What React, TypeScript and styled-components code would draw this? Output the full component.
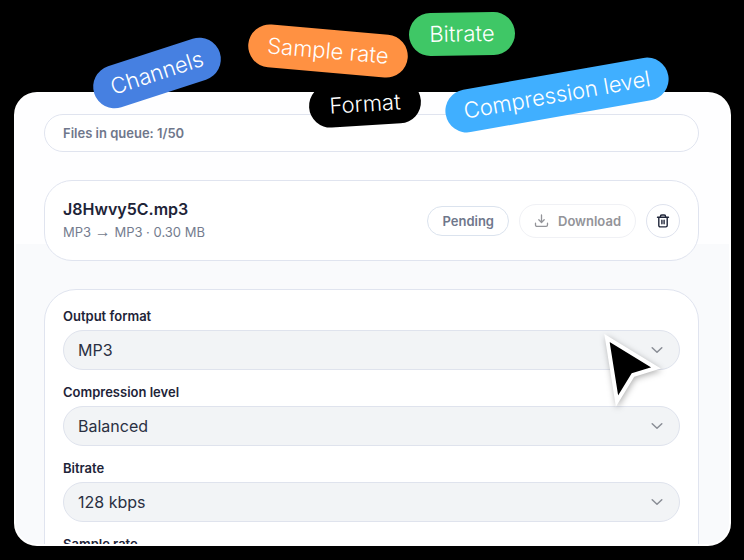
import React from "react";
import styled, { createGlobalStyle } from "styled-components";

const GlobalStyle = createGlobalStyle`
  * { box-sizing: border-box; }
  body { margin: 0; background: #000; font-family: Inter, "Liberation Sans", sans-serif; color: #1e2438; }
  button, select { font-family: inherit; }
`;

const Stage = styled.main`
  position: relative;
  display: flex;
  flex-direction: column;
  height: 100vh;
  padding: 92px 13px 14px 14px;
  overflow: hidden;
`;

const Panel = styled.section`
  flex: 1;
  min-height: 0;
  display: flex;
  flex-direction: column;
  gap: 28px;
  padding: 20px 30px 0 28px;
  overflow: hidden;
  border: 2px solid #fff;
  border-radius: 23px;
  background: linear-gradient(#fefeff 150px, #f9fafc 150px);
`;

const Card = styled.div`
  flex-shrink: 0;
  padding: 17px 18px;
  border: 1px solid #e0e4ef;
  border-radius: 32px;
  background: #fff;
`;

const QueueBar = styled(Card)`
  padding: 9px 18px;
  font-size: 13px;
  line-height: 18px;
  font-weight: 600;
  color: #6f778b;
`;

const FileCard = styled(Card)`
  display: flex;
  align-items: center;
  gap: 10px;
  padding: 16px 18px;
  border-radius: 28px;
`;

const FileInfo = styled.div`
  flex: 1;
  min-width: 0;
`;

const FileName = styled.h2`
  margin: 0;
  font-size: 16px;
  line-height: 24px;
  font-weight: 600;
`;

const FileMeta = styled.p`
  margin: 0;
  font-size: 13px;
  line-height: 23px;
  color: #747c8e;
`;

const Arrow = styled.span`
  font-family: "Liberation Sans", sans-serif;
  font-size: 16px;
  line-height: 1;
`;

const Status = styled.span`
  padding: 5px 14px;
  border: 1px solid #dbe3ee;
  border-radius: 15px;
  font-size: 13px;
  line-height: 18px;
  font-weight: 600;
  color: #6f778b;
`;

const ActionButton = styled.button`
  display: flex;
  align-items: center;
  justify-content: center;
  gap: 8px;
  height: 34px;
  padding: 0 14px;
  border: 1px solid #dfe3ee;
  border-radius: 17px;
  background: #fff;
  color: #1e2438;
  font-size: 13px;
  font-weight: 600;

  &:disabled {
    border-color: #f0f1f5;
    color: #939499;
  }
`;

const IconButton = styled(ActionButton)`
  width: 34px;
  padding: 0;
`;

const Settings = styled(Card)`
  display: flex;
  flex-direction: column;
  gap: 13px;
`;

const Field = styled.div`
  display: grid;
  gap: 5px;
`;

const Label = styled.label`
  font-size: 13px;
  line-height: 18px;
  font-weight: 600;
`;

const SelectBox = styled.div`
  display: grid;
  align-items: center;

  > * { grid-area: 1 / 1; }
  > svg { justify-self: end; margin-right: 16px; pointer-events: none; }
`;

const Select = styled.select`
  appearance: none;
  width: 100%;
  height: 40px;
  padding: 0 40px 0 14px;
  border: 1px solid #dfe3ed;
  border-radius: 20px;
  background: #f2f4f6;
  color: #2a3042;
  font-size: 16px;
`;

const Tag = styled.span<{ $x: number; $y: number; $width: number; $angle: number; $color: string }>`
  position: absolute;
  left: ${(p) => p.$x}px;
  top: ${(p) => p.$y}px;
  width: ${(p) => p.$width}px;
  transform: translate(-50%, -50%) rotate(${(p) => p.$angle}deg);
  border-radius: 22px;
  background: ${(p) => p.$color};
  color: #fff;
  font-size: 22px;
  font-weight: 300;
  font-optical-sizing: none;
  line-height: 43px;
  text-align: center;
  white-space: nowrap;
`;

const Pointer = styled.svg`
  position: absolute;
  left: 600px;
  top: 332px;
  filter: drop-shadow(1px 2px 3px rgba(0, 0, 0, 0.3));
  pointer-events: none;
`;

const Chevron = () => (
  <svg width="14" height="14" viewBox="0 0 14 14" fill="none" stroke="#8a8e96" strokeWidth="1.5" strokeLinecap="round" strokeLinejoin="round" aria-hidden="true">
    <path d="M2.2 4.7l4.8 4.6 4.8-4.6" />
  </svg>
);

const DownloadIcon = () => (
  <svg width="16" height="16" viewBox="0 0 16 16" fill="none" stroke="currentColor" strokeWidth="1.3" strokeLinecap="round" strokeLinejoin="round" aria-hidden="true">
    <path d="M7.5 2v7.4M4.8 6.8l2.7 2.7 2.7-2.7M1.5 10.2v1.8a1.4 1.4 0 0 0 1.4 1.4h9.2a1.4 1.4 0 0 0 1.4-1.4v-1.8" />
  </svg>
);

const TrashIcon = () => (
  <svg width="16" height="16" viewBox="0 0 16 16" fill="none" stroke="currentColor" strokeWidth="1.4" strokeLinecap="round" strokeLinejoin="round" aria-hidden="true">
    <path d="M2.5 4.2h11M5.4 4.2v-.8a1.4 1.4 0 0 1 1.4-1.4h2.4a1.4 1.4 0 0 1 1.4 1.4v.8M3.8 4.2v8.4a1.3 1.3 0 0 0 1.3 1.3h5.8a1.3 1.3 0 0 0 1.3-1.3V4.2M6.9 7.2v3.6M9.1 7.2v3.6" />
  </svg>
);

const fields = [
  { id: "format", label: "Output format", options: ["MP3", "WAV", "FLAC"] },
  { id: "compression", label: "Compression level", options: ["Balanced", "Low", "High"] },
  { id: "bitrate", label: "Bitrate", options: ["128 kbps", "192 kbps", "320 kbps"] },
  { id: "rate", label: "Sample rate", options: ["44100 Hz", "48000 Hz"] },
];

const tags = [
  { text: "Channels", x: 157, y: 73, width: 132, angle: -18, color: "#4680e1" },
  { text: "Format", x: 365, y: 104, width: 112, angle: -3.5, color: "#000" },
  { text: "Sample rate", x: 328, y: 51, width: 160, angle: 5, color: "#ff9142" },
  { text: "Bitrate", x: 462, y: 34, width: 106, angle: -1, color: "#3fc766" },
  { text: "Compression level", x: 557, y: 95, width: 226, angle: -10, color: "#40afff" },
];

export default function App() {
  return (
    <Stage>
      <GlobalStyle />
      <Panel>
        <QueueBar>Files in queue: 1/50</QueueBar>
        <FileCard>
          <FileInfo>
            <FileName>J8Hwvy5C.mp3</FileName>
            <FileMeta>
              MP3 <Arrow>→</Arrow> MP3 · 0.30 MB
            </FileMeta>
          </FileInfo>
          <Status>Pending</Status>
          <ActionButton type="button" disabled>
            <DownloadIcon />
            Download
          </ActionButton>
          <IconButton type="button" aria-label="Delete file">
            <TrashIcon />
          </IconButton>
        </FileCard>
        <Settings as="form">
          {fields.map((f) => (
            <Field key={f.id}>
              <Label htmlFor={f.id}>{f.label}</Label>
              <SelectBox>
                <Select id={f.id}>
                  {f.options.map((o) => (
                    <option key={o}>{o}</option>
                  ))}
                </Select>
                <Chevron />
              </SelectBox>
            </Field>
          ))}
        </Settings>
      </Panel>
      {tags.map((t) => (
        <Tag key={t.text} $x={t.x} $y={t.y} $width={t.width} $angle={t.angle} $color={t.color}>
          {t.text}
        </Tag>
      ))}
      <Pointer width="66" height="78" viewBox="0 0 66 78" aria-hidden="true">
        <path d="M7 6L56 36L33 43L17 69Z" fill="#000" stroke="#fff" strokeWidth="4" />
      </Pointer>
    </Stage>
  );
}
